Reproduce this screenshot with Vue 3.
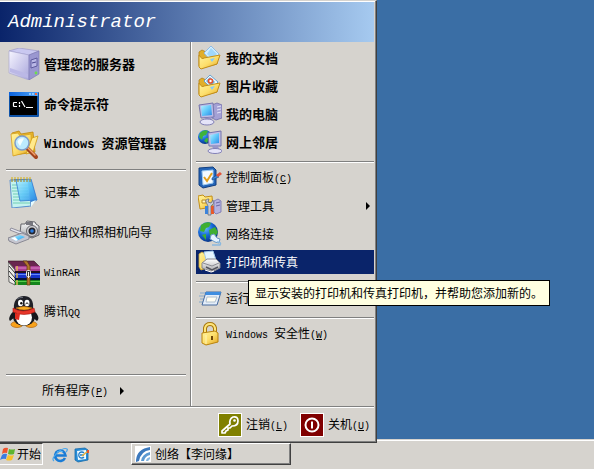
<script setup>
import { ref } from 'vue'

const pinned = [
  { icon: 'server', text: '管理您的服务器' },
  { icon: 'cmd', text: '命令提示符' },
  { icon: 'explorer', latin: 'Windows ', text: '资源管理器' }
]

const recent = [
  { icon: 'notepad', text: '记事本' },
  { icon: 'scanner', text: '扫描仪和照相机向导' },
  { icon: 'winrar', latin: 'WinRAR' },
  { icon: 'qq', text: '腾讯', tail: 'QQ' }
]

const places = [
  [
    { icon: 'documents', text: '我的文档', bold: true },
    { icon: 'pictures', text: '图片收藏', bold: true },
    { icon: 'computer', text: '我的电脑', bold: true },
    { icon: 'network', text: '网上邻居', bold: true }
  ],
  [
    { icon: 'control', text: '控制面板', hotkey: 'C' },
    { icon: 'tools', text: '管理工具', submenu: true },
    { icon: 'connections', text: '网络连接' },
    { icon: 'printer', text: '打印机和传真', tip: '显示安装的打印机和传真打印机，并帮助您添加新的。' }
  ],
  [
    { icon: 'run', text: '运行' }
  ],
  [
    { icon: 'lock', latin: 'Windows ', text: '安全性', hotkey: 'W' }
  ]
]

const active = ref('printer')
const menuOpen = ref(true)
</script>

<template>
  <div class="desktop">
    <!-- Icon sheet -->
    <svg class="sheet" aria-hidden="true">
      <defs>
        <linearGradient id="gold" x1="0" y1="0" x2="1" y2="1">
          <stop offset="0" stop-color="#fff3a0" />
          <stop offset="0.5" stop-color="#fddf6c" />
          <stop offset="1" stop-color="#e2a21c" />
        </linearGradient>
        <linearGradient id="sky" x1="0" y1="0" x2="1" y2="1">
          <stop offset="0" stop-color="#b8f0ff" />
          <stop offset="0.5" stop-color="#5fc8fa" />
          <stop offset="1" stop-color="#2d8ae6" />
        </linearGradient>
        <linearGradient id="lilac" x1="0" y1="0" x2="1" y2="1">
          <stop offset="0" stop-color="#f6f5ff" />
          <stop offset="1" stop-color="#a9a6dc" />
        </linearGradient>
        <linearGradient id="silver" x1="0" y1="0" x2="0" y2="1">
          <stop offset="0" stop-color="#ffffff" />
          <stop offset="1" stop-color="#a4a4a8" />
        </linearGradient>
        <linearGradient id="titlebar" x1="0" y1="0" x2="1" y2="0">
          <stop offset="0" stop-color="#0c62dc" />
          <stop offset="1" stop-color="#4fa4f6" />
        </linearGradient>
        <radialGradient id="globe" cx="0.35" cy="0.3" r="0.75">
          <stop offset="0" stop-color="#6cc4ff" />
          <stop offset="0.5" stop-color="#1769d8" />
          <stop offset="1" stop-color="#07307e" />
        </radialGradient>
      </defs>

      <symbol id="server" viewBox="0 0 32 32">
        <path d="M1 3L11 0L31 3L21 7Z" fill="#c9c8f0" stroke="#9794c6" stroke-width=".6" />
        <path d="M1 3L21 7V32L1 25Z" fill="url(#lilac)" stroke="#a5a2d0" stroke-width=".6" />
        <path d="M21 7L31 3V26L21 32Z" fill="#9a97d0" stroke="#7773b0" stroke-width=".6" />
        <path d="M2 20L20 26V30L2 24Z" fill="#bbb8e6" />
        <path d="M23 12L29 10V18L23 20Z" fill="#b9b7e6" stroke="#5f5b9e" />
        <path d="M24 15L28 14" stroke="#4a468e" />
        <circle cx="28" cy="25" r="1.4" fill="#6be04a" />
      </symbol>

      <symbol id="cmd" viewBox="0 0 32 32">
        <rect x="1" y="4" width="30" height="25" rx="1" fill="#0f53a8" />
        <rect x="1" y="4" width="29" height="4" fill="url(#titlebar)" />
        <rect x="2" y="8" width="27" height="19" fill="#000" />
        <path d="M21 5h2v2h-2zM24 5h2v2h-2z" fill="#8cc8ff" />
        <path d="M27 5h2v2h-2z" fill="#f0643c" />
        <path d="M9 14.5H6L5.5 15V18L6 18.5H9M11.5 14v2M11.5 17v2M13.5 13L17 19M18 19.5H25" fill="none" stroke="#fff" stroke-width="1.2" />
      </symbol>

      <symbol id="explorer" viewBox="0 0 32 32">
        <path d="M4 5L11 3L13 6L25 4L27 24L6 27Z" fill="#e8b62c" stroke="#bf860a" stroke-width=".8" />
        <path d="M3 6L10 5L12 8L23 6L24 23L5 28Z" fill="url(#gold)" stroke="#d5a01e" stroke-width=".8" />
        <path d="M24 10L30 8L25 24L18 26Z" fill="#ffe98b" stroke="#d09a14" stroke-width=".8" />
        <path d="M20 21L28 29" stroke="#a4441e" stroke-width="4" stroke-linecap="round" />
        <path d="M20 20L27 27" stroke="#f2a46c" stroke-width="1.5" stroke-linecap="round" />
        <circle cx="14" cy="15" r="7" fill="#bceaff" stroke="#7f9bc8" stroke-width="1.5" />
        <path d="M9.5 14A5 5 0 0 1 16 10.5L12 18Z" fill="#f4fdff" />
      </symbol>

      <symbol id="notepad" viewBox="0 0 32 32">
        <path d="M6 3L23 4L29 24L20 31L4 29Z" fill="#2c81cf" />
        <path d="M2 4L20 4L23 30L4 32Z" fill="#c5f3ee" stroke="#5d92cf" />
        <path d="M4 9H20M4 12H20M4 15H20M5 18H21M5 21H21M5 24H21M5 27H22" stroke="#73cdb6" />
        <path d="M8 4L23 3L29 24L12 25Z" fill="url(#sky)" stroke="#3982d6" opacity=".88" />
        <path d="M23 26L28 24L23 31Z" fill="#e7fbff" />
        <path d="M4 1V6M7 1V6M10 1V6M13 1V6M16 1V6M19 1V6M22 1V6" stroke="#a38c38" stroke-width="1.2" />
        <path d="M3 2h20" stroke="#f4dc6a" stroke-dasharray="2 1" />
      </symbol>

      <symbol id="scanner" viewBox="0 0 32 32">
        <path d="M13 8L17 8L19 5L27 6L28 8L31 10V19L24 22L12 17Z" fill="url(#silver)" stroke="#65656b" />
        <rect x="18" y="6" width="7" height="3" fill="#77777f" />
        <circle cx="24" cy="15" r="5.5" fill="#d0d0d4" stroke="#66666c" />
        <circle cx="24" cy="15" r="3.5" fill="#26262e" />
        <circle cx="24" cy="15" r="1.8" fill="#2a7ce0" />
        <path d="M3 12L19 18L17 20L2 14Z" fill="#e6e6ee" stroke="#7b7b8d" stroke-width=".8" />
        <path d="M0 22L14 17L21 20V23L8 28L1 25Z" fill="#c6c6cf" stroke="#777784" stroke-width=".8" />
        <path d="M3 22L12 19L17 21L8 25Z" fill="url(#sky)" />
        <path d="M3 22L7 21L10 24L8 25Z" fill="#fff" />
      </symbol>

      <symbol id="winrar" viewBox="0 0 32 32">
        <path d="M0 6L7 14V29L1 26Z" fill="#eeeeea" stroke="#444" stroke-width=".8" />
        <path d="M1 10L7 17M1 15L7 22M1 20L7 26" stroke="#333" />
        <path d="M0 5H26L32 11V13H7Z" fill="#69254f" stroke="#321020" stroke-width=".6" />
        <path d="M7 10H32V15H7Z" fill="#a93c8f" />
        <path d="M7 12H32" stroke="#dd83cb" />
        <path d="M7 15H32V17H7Z" fill="#221022" />
        <path d="M7 17H32V22H7Z" fill="#1634cb" />
        <path d="M7 18.5H32" stroke="#6488fa" />
        <path d="M7 22H32V24H7Z" fill="#06143e" />
        <path d="M7 24H32V29H7Z" fill="#14851c" />
        <path d="M7 25.5H32" stroke="#57cc4c" />
        <path d="M9 10v5M9 17v5M9 24v5" stroke="#ddb454" stroke-width="1.5" />
        <path d="M15 5L19 5L22 10V29H19V10Z" fill="#b2752d" stroke="#5b360c" stroke-width=".7" />
        <rect x="18.5" y="14.500" width="4" height="6" rx="1" fill="#353535" stroke="#e4e4e4" />
        <path d="M20.5 16v6" stroke="#f4f4f4" />
      </symbol>

      <symbol id="qq" viewBox="0 0 32 32">
        <path d="M6 15C2 18 0 23 2 25L7 21ZM26 15C30 18 32 23 29 25L24 21Z" fill="#16171c" />
        <ellipse cx="9" cy="28.5" rx="6" ry="3" fill="#f8a21c" stroke="#b2640b" stroke-width=".7" />
        <ellipse cx="23" cy="28.5" rx="6" ry="3" fill="#f8a21c" stroke="#b2640b" stroke-width=".7" />
        <ellipse cx="16" cy="20.5" rx="11" ry="9.5" fill="#17181e" />
        <ellipse cx="16" cy="21.5" rx="8" ry="8" fill="#fff" />
        <path d="M6 13C5 4 10 0 16 0S26 4 25 13C22 17 9 17 6 13Z" fill="#1f2027" />
        <path d="M9 3Q12 1 15 1.5" stroke="#686b78" fill="none" />
        <ellipse cx="12.5" cy="7" rx="2.5" ry="3.3" fill="#fff" />
        <ellipse cx="19" cy="7" rx="2.5" ry="3.3" fill="#fff" />
        <circle cx="13.3" cy="7.3" r="1.2" fill="#111" />
        <path d="M17.5 8Q19 5.5 20.5 8" stroke="#111" fill="none" />
        <path d="M8 12Q16 9 24 12Q16 16 8 12Z" fill="#f9ad20" stroke="#c46e10" stroke-width=".6" />
        <path d="M5 12Q15 18 26 12L27 16Q16 21 5 16Z" fill="#e7362a" stroke="#a71812" stroke-width=".6" />
        <path d="M7 17L12 18L11 24L7 23Z" fill="#e02b20" />
      </symbol>

      <symbol id="documents" viewBox="0 0 24 24">
        <path d="M1 6L4 4L8 6H17L19 18L4 22L1 20Z" fill="#e0ae2b" stroke="#b28218" stroke-width=".8" />
        <path d="M6 7L13 0L21 8L14 16Z" fill="#d3efff" stroke="#8ebbe5" />
        <path d="M13 2L19 8L14 13L9 8Z" fill="#9fd7fc" />
        <path d="M1 9Q4 14 6 12L22 9L19 18L3 23L1 21Z" fill="url(#gold)" stroke="#c28e19" />
        <path d="M12 13L17 12L14 16Z" fill="#8acbf5" />
      </symbol>

      <symbol id="pictures" viewBox="0 0 24 24">
        <path d="M1 6L4 4L8 6H17L19 18L4 22L1 20Z" fill="#e0ae2b" stroke="#b28218" stroke-width=".8" />
        <path d="M6 7L12 1L20 8L14 15Z" fill="#f1fbff" stroke="#69a3d0" />
        <path d="M8 7L12 3L17 8L13 12Z" fill="#6caee0" />
        <circle cx="12.5" cy="7" r="2.8" fill="#e8532d" />
        <circle cx="12.5" cy="7" r="1.2" fill="#fff" />
        <path d="M1 9Q4 14 6 12L22 9L19 18L3 23L1 21Z" fill="url(#gold)" stroke="#c28e19" />
        <path d="M12 13L17 12L14 16Z" fill="#8acbf5" />
      </symbol>

      <symbol id="computer" viewBox="0 0 24 24">
        <path d="M14 3L19 1L24 3V16L18 18L14 16Z" fill="#a4a1d5" stroke="#716da9" stroke-width=".8" />
        <path d="M19 5L23 4M19 8L23 7M19 11L23 10" stroke="#e5e4fa" />
        <path d="M1 3L15 1L16 15L3 16Z" fill="#bcbbe4" stroke="#7574ab" />
        <path d="M3 4L13 3L14 13L4 14Z" fill="url(#sky)" />
        <path d="M7 16L13 15L14 18H8Z" fill="#9896c9" />
        <ellipse cx="9" cy="20" rx="7" ry="3" fill="#e5e4f9" stroke="#8381b7" />
      </symbol>

      <symbol id="network" viewBox="0 0 24 24">
        <circle cx="7" cy="7" r="7" fill="url(#globe)" />
        <path d="M2 3Q6 -1 10 1L8 5L5 6L4 10L1 7ZM8 8L11 8L9 13L6 11Z" fill="#3eb23a" />
        <path d="M10 3L23 1V16L11 16Z" fill="#c0bfe8" stroke="#7574ab" />
        <path d="M12 5L21 3V13L13 14Z" fill="url(#sky)" />
        <path d="M14 16L20 16L21 19H15Z" fill="#9896c9" />
        <ellipse cx="17" cy="21" rx="7" ry="2.5" fill="#e5e4f9" stroke="#8381b7" />
      </symbol>

      <symbol id="control" viewBox="0 0 24 24">
        <path d="M1 2L15 1L18 4V19L5 22L1 19Z" fill="#2465b8" stroke="#123f80" />
        <path d="M4 5L15 4V17L5 19Z" fill="#f5fbff" stroke="#9fcbf0" />
        <path d="M6 11L9 15L14 7" stroke="#e3a11e" stroke-width="2" fill="none" />
        <path d="M14 12L19 9L21 11L14 14Z" fill="#3b83d5" stroke="#164987" stroke-width=".6" />
        <path d="M18 9L22 6L24 8L20 11Z" fill="#e1543a" />
      </symbol>

      <symbol id="tools" viewBox="0 0 24 24">
        <path d="M0 2L5 1L7 3L14 2L15 13L2 15Z" fill="url(#gold)" stroke="#c28e19" />
        <path d="M4 6H8V9H4Z" fill="#fff7c7" stroke="#b88a20" />
        <path d="M8 8Q7 5 11 5L10 8L13 9L15 6Q17 10 13 12V21H10V12Z" fill="#c8ccd6" stroke="#666c7c" stroke-width=".8" />
        <path d="M7 12H10V20H7Z" fill="#3c83da" />
        <path d="M13 12H16V20H13Z" fill="#ea5927" />
        <path d="M16 7L20 5L23 7V18L18 20L16 18Z" fill="#b5b3e0" stroke="#7471ac" stroke-width=".8" />
        <path d="M18 9L22 8M18 12L22 11" stroke="#6c69a5" />
      </symbol>

      <symbol id="connections" viewBox="0 0 24 24">
        <circle cx="10" cy="10" r="10" fill="url(#globe)" />
        <path d="M3 3Q8 -1 13 1L11 5L8 6L6 10L2 9ZM11 8L17 5L20 10L17 15L12 14ZM4 13L8 12L8 18Z" fill="#3fae32" />
        <path d="M13 13L16 12L19 16L22 17L21 21L17 20L12 17Z" fill="#e4f2ff" stroke="#6b99c5" />
        <path d="M19 20Q24 20 22 23H14" fill="none" stroke="#8bb9df" stroke-width="1.5" />
      </symbol>

      <symbol id="printer" viewBox="0 0 24 24">
        <path d="M1 4L4 2L7 4H12V17L3 20L1 17Z" fill="url(#gold)" stroke="#d1a633" stroke-width=".8" />
        <path d="M6 2L15 1L18 10L9 13Z" fill="#e5f5ff" stroke="#a0c9e9" />
        <path d="M4 13L9 9L18 9L22 13V18L14 22L4 18Z" fill="url(#silver)" stroke="#88888f" />
        <path d="M5 13L14 16L21 13" fill="none" stroke="#8d8d94" />
        <path d="M8 17L14 20L20 17" fill="none" stroke="#54545e" stroke-width="1.5" />
        <path d="M7 20L13 22L16 21" stroke="#fff" fill="none" />
      </symbol>

      <symbol id="run" viewBox="0 0 24 24">
        <path d="M2 7H8M1 10H8M2 13H7M1 16H6" stroke="#86aacc" />
        <path d="M8 6H23L19 19H4Z" fill="#e4edf9" stroke="#466a9e" />
        <path d="M8 6H23L22 9H7Z" fill="#3e8de0" />
        <path d="M9 11H19L17 16H8Z" fill="#fffdf2" stroke="#aebfce" />
      </symbol>

      <symbol id="lock" viewBox="0 0 24 24">
        <path d="M7 12V6Q8 2 12 2T17 6V10" fill="none" stroke="#a8780d" stroke-width="4" />
        <path d="M7 12V6Q8 2 12 2T17 6V10" fill="none" stroke="#ffe57a" stroke-width="2" />
        <path d="M4 11L17 9L20 11V20L8 23L4 21Z" fill="url(#gold)" stroke="#b9830d" />
        <path d="M8 13V22" stroke="#fff5b8" />
        <path d="M14 14v4" stroke="#70480a" stroke-width="2" />
      </symbol>

      <symbol id="key" viewBox="0 0 24 24">
        <rect x=".5" y=".5" width="23" height="23" fill="#808000" stroke="#fff" />
        <path d="M12 11Q11 6 15 4Q20 3 20 8Q20 13 14 13L12 15L10 15L10 17L8 18L7 20L4 20L4 18Z" fill="none" stroke="#fff" stroke-width="1.7" stroke-linejoin="round" />
        <circle cx="16.5" cy="7.5" r="1.3" fill="#fff" />
      </symbol>

      <symbol id="power" viewBox="0 0 24 24">
        <rect x=".5" y=".5" width="23" height="23" fill="#800000" stroke="#fff" />
        <circle cx="12" cy="12" r="6.5" fill="none" stroke="#fff" stroke-width="2" />
        <path d="M12 8.5v7" stroke="#fff" stroke-width="2" />
      </symbol>

      <symbol id="flag" viewBox="0 0 16 16">
        <path d="M3 3Q5 1 8 2L7 7Q4 6 2 8Z" fill="#ee542d" />
        <path d="M9 3Q12 4 15 3L14 8Q11 9 8 8Z" fill="#5eb52f" />
        <path d="M2 9Q4 7 7 8L6 13Q3 12 0 14Z" fill="#397ce0" />
        <path d="M8 9Q11 10 14 9L12 14Q9 15 6 14Z" fill="#f8c22c" />
      </symbol>

      <symbol id="ie" viewBox="0 0 16 16">
        <path d="M13 11A5.2 5.2 0 1 1 13.5 8.5H4.5" fill="none" stroke="#1a7cd6" stroke-width="2.6" />
        <path d="M5 5Q8 3 11 5" fill="none" stroke="#65bdf6" />
        <path d="M2 14Q-1 12 5 6Q12 0 15 2Q16 3 14 5" fill="none" stroke="#4ba6ea" stroke-width="1.2" />
      </symbol>

      <symbol id="desk" viewBox="0 0 16 16">
        <path d="M1 2L11 1L14 3V13L4 15L1 13Z" fill="#278cd6" stroke="#1769aa" stroke-width=".8" />
        <path d="M3 4L12 3V12L4 13Z" fill="#f1fbff" />
        <path d="M10 6A3 3 0 1 0 10 10M6 8H10" fill="none" stroke="#237cc9" stroke-width="1.3" />
        <path d="M8 9L14 4" stroke="#e9b03a" stroke-width="1.6" />
        <path d="M13 3h2v3h-2z" fill="#e5532d" />
      </symbol>

      <symbol id="feed" viewBox="0 0 16 16">
        <rect width="16" height="16" fill="#fff" />
        <path d="M1 14Q2 3 15 1L15 4Q6 5 4 15L1 16Z" fill="#3c79bd" />
        <path d="M6 15Q7 8 15 6V9Q10 10 9 15Z" fill="#5b99d2" />
        <path d="M11 15Q11 12 15 11V13L13 15Z" fill="#87b7e0" />
      </symbol>
    </svg>

    <main class="workspace"></main>

    <nav v-if="menuOpen" class="start-menu" aria-label="开始">
      <h1 class="user">Administrator</h1>

      <div class="columns">
        <div class="programs">
          <button v-for="item in pinned" :key="item.icon" class="program bold">
            <svg class="icon-large"><use :href="'#' + item.icon" /></svg>
            <span><span v-if="item.latin" class="latin">{{ item.latin }}</span>{{ item.text }}</span>
          </button>
          <hr class="line program-line" />
          <button v-for="item in recent" :key="item.icon" class="program">
            <svg class="icon-large"><use :href="'#' + item.icon" /></svg>
            <span><span v-if="item.latin" class="latin">{{ item.latin }}</span>{{ item.text }}<span v-if="item.tail" class="latin">{{ item.tail }}</span></span>
          </button>
          <div class="all-programs">
            <hr class="line" />
            <button class="all-button">
              <span>所有程序<span class="latin">(<u>P</u>)</span></span>
              <span class="arrow"></span>
            </button>
          </div>
        </div>

        <div class="places">
          <template v-for="(group, index) in places" :key="index">
            <hr v-if="index > 0" class="line place-line" />
            <ul class="group">
              <li v-for="item in group" :key="item.icon" class="place-row">
                <button
                  class="place"
                  :class="{ bold: item.bold, active: active === item.icon }"
                  @mouseenter="active = item.icon"
                >
                  <svg class="icon-small"><use :href="'#' + item.icon" /></svg>
                  <span><span v-if="item.latin" class="latin">{{ item.latin }}</span>{{ item.text }}<span v-if="item.hotkey" class="latin">(<u>{{ item.hotkey }}</u>)</span></span>
                  <span v-if="item.submenu" class="arrow submenu"></span>
                </button>
                <div v-if="item.tip && active === item.icon" class="tooltip" role="tooltip">{{ item.tip }}</div>
              </li>
            </ul>
          </template>
        </div>
      </div>

      <div class="session">
        <button class="session-button">
          <svg class="icon-small"><use href="#key" /></svg>
          <span>注销<span class="latin">(<u>L</u>)</span></span>
        </button>
        <button class="session-button">
          <svg class="icon-small"><use href="#power" /></svg>
          <span>关机<span class="latin">(<u>U</u>)</span></span>
        </button>
      </div>
    </nav>

    <footer class="taskbar">
      <button class="start" @click="menuOpen = !menuOpen">
        <svg class="icon-tiny"><use href="#flag" /></svg>开始
      </button>
      <div class="quick-launch">
        <button aria-label="Internet Explorer">
          <svg class="icon-tiny"><use href="#ie" /></svg>
        </button>
        <button aria-label="显示桌面">
          <svg class="icon-tiny"><use href="#desk" /></svg>
        </button>
      </div>
      <button class="task">
        <svg class="icon-tiny"><use href="#feed" /></svg>创络【李问缘】
      </button>
    </footer>
  </div>
</template>

<style>
body {
  margin: 0;
}
</style>

<style scoped>
.desktop {
  position: relative;
  display: flex;
  flex-direction: column;
  min-height: 100vh;
  overflow: hidden;
  background: #3a6ea5;
  color: #000;
  font-family: "Noto Sans CJK SC", sans-serif;
  font-size: 12px;
  line-height: 16px;
}

.sheet {
  position: absolute;
  width: 0;
  height: 0;
}

.workspace {
  flex: 1;
}

button {
  display: flex;
  align-items: center;
  padding: 0;
  border: none;
  background: none;
  color: inherit;
  font: inherit;
  text-align: left;
  white-space: nowrap;
}

svg {
  flex: none;
}

.bold {
  font-size: 13px;
  font-weight: 700;
}

.latin {
  font-family: "Liberation Mono", monospace;
  font-size: 10px;
  white-space: pre;
}

.bold .latin {
  font-size: 12px;
}

.start-menu {
  position: absolute;
  bottom: 26px;
  left: 0;
  z-index: 1;
  box-sizing: border-box;
  padding-right: 1px;
  border-top: 1px solid #d6d3ce;
  border-right: 1px solid #404040;
  border-bottom: 1px solid #404040;
  background: #d6d3ce;
  box-shadow: inset -1px -1px #808080, inset 0 1px #fff;
}

.user {
  margin: 1px 1px 0 0;
  padding-left: 8px;
  background: linear-gradient(to right, #0a246a, #a6caf0);
  color: #fff;
  font-family: "Liberation Mono", monospace;
  font-size: 19px;
  font-style: italic;
  font-weight: 400;
  line-height: 40px;
}

.columns {
  display: flex;
}

.programs {
  display: flex;
  flex-direction: column;
  width: 190px;
  padding-top: 2px;
  border-right: 1px solid #808080;
  box-sizing: content-box;
}

.program {
  gap: 4px;
  height: 40px;
  padding-left: 8px;
}

.icon-large {
  width: 32px;
  height: 32px;
}

.icon-small {
  width: 24px;
  height: 24px;
}

.icon-tiny {
  width: 16px;
  height: 16px;
}

.line {
  margin: 0;
  border: none;
  border-top: 1px solid #808080;
  border-bottom: 1px solid #fff;
}

.program-line {
  margin: 5px 4px 1px 6px;
}

.all-programs {
  margin-top: 42px;
  padding: 0 4px 3px 6px;
}

.all-button {
  gap: 12px;
  height: 24px;
  margin-top: 3px;
  padding-left: 36px;
}

.arrow {
  border: 4px solid transparent;
  border-right: none;
  border-left-color: #000;
}

.places {
  width: 178px;
  padding: 4px 1px 0 4px;
  border-left: 1px solid #fff;
}

.group {
  display: flex;
  flex-direction: column;
  gap: 4px;
  margin: 0;
  padding: 0;
  list-style: none;
}

.place-row {
  position: relative;
}

.place {
  gap: 4px;
  width: 100%;
  height: 24px;
  padding: 0 4px 0 2px;
}

.place.active {
  background: #0a246a;
  color: #fff;
}

.place-line {
  margin: 7px 0 3px;
}

.submenu {
  margin-left: auto;
}

.tooltip {
  position: absolute;
  top: 30px;
  left: 52px;
  z-index: 2;
  padding: 4px 6px;
  border: 1px solid #000;
  background: #ffffe1;
  color: #000;
  white-space: nowrap;
}

.session {
  display: flex;
  justify-content: flex-end;
  gap: 12px;
  margin-right: 1px;
  padding: 6px 4px 5px;
  border-top: 1px solid #808080;
  box-shadow: inset 0 1px #fff;
}

.session-button {
  gap: 4px;
}

.taskbar {
  display: flex;
  align-items: flex-start;
  padding: 3px 0 4px;
  border-top: 1px solid #d6d3ce;
  background: #d6d3ce;
  box-shadow: inset 0 1px #fff;
}

.start {
  gap: 1px;
  height: 22px;
  padding-right: 1px;
  border: 1px solid #fff;
  border-top-color: #404040;
  border-left: none;
}

.quick-launch {
  display: flex;
  gap: 6px;
  padding: 4px 41px 0 9px;
}

.task {
  gap: 4px;
  width: 160px;
  height: 22px;
  padding-left: 3px;
  border: 1px solid;
  border-color: #fff #404040 #404040 #fff;
  box-shadow: inset -1px -1px #808080;
}
</style>
